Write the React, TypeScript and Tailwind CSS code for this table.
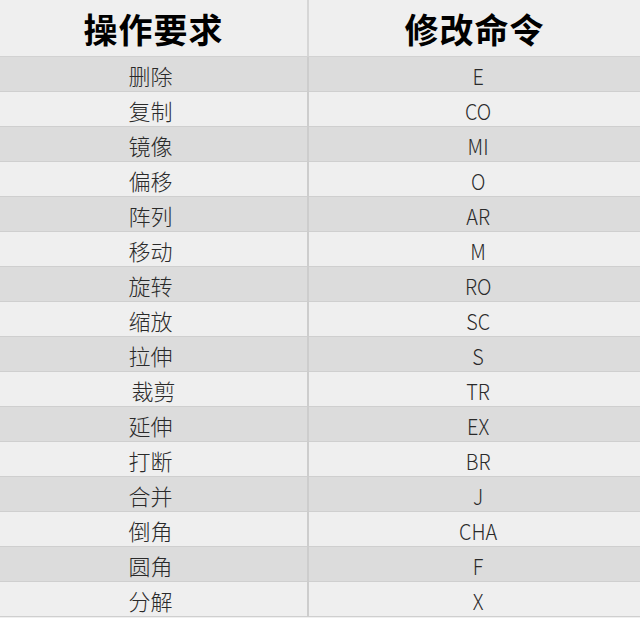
import React from 'react';

const rows: [string, string][] = [
  ['删除', 'E'],
  ['复制', 'CO'],
  ['镜像', 'MI'],
  ['偏移', 'O'],
  ['阵列', 'AR'],
  ['移动', 'M'],
  ['旋转', 'RO'],
  ['缩放', 'SC'],
  ['拉伸', 'S'],
  ['裁剪', 'TR'],
  ['延伸', 'EX'],
  ['打断', 'BR'],
  ['合并', 'J'],
  ['倒角', 'CHA'],
  ['圆角', 'F'],
  ['分解', 'X'],
];

const font = { fontFamily: '"Noto Sans CJK SC", "Noto Sans", sans-serif' };

export default function App() {
  return (
    <div className="w-[640px] h-[618px] bg-[#efefef] overflow-hidden text-[#2a2a2a]" style={font}>
      {/* Header */}
      <div className="grid grid-cols-[307px_2px_331px] h-[57px] border-b border-[#d2d2d2]">
        <div className="flex items-center justify-center text-[34px] font-bold text-black tracking-[1px]">操作要求</div>
        <div className="bg-[#d6d6d6]" />
        <div className="flex items-center justify-center text-[34px] font-bold text-black tracking-[1px]">修改命令</div>
      </div>

      {rows.map(([op, cmd], i) => (
        <div
          key={op}
          className={`grid grid-cols-[307px_2px_331px] h-[35px] border-b border-[#cfcfcf] ${
            i % 2 === 0 ? 'bg-[#dcdcdc]' : 'bg-[#efefef]'
          }`}
        >
          <div
            className={`flex items-center justify-center pt-[2px] text-[22px] font-light ${
              op === '裁剪' ? 'pl-[0px]' : 'pr-[6px]'
            }`}
          >
            {op}
          </div>
          <div className="bg-[#cdcdcd]" />
          <div className="flex items-center justify-center pt-[2px] pl-[8px] text-[22px] font-light scale-x-[0.9]">{cmd}</div>
        </div>
      ))}
    </div>
  );
}
